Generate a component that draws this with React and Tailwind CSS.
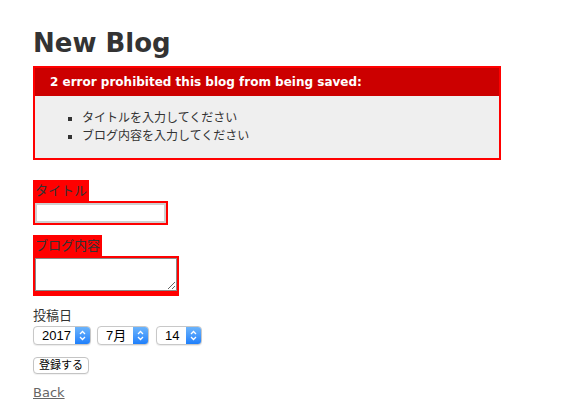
import { useState } from "react";

const FONT = "font-['DejaVu_Sans','Noto_Sans_CJK_JP',sans-serif]";

function Stepper() {
  return (
    <svg width="7" height="11" viewBox="0 0 7 11" fill="none">
      <path d="M1 4 L3.5 1.5 L6 4" stroke="white" strokeWidth="1.3" />
      <path d="M1 7 L3.5 9.5 L6 7" stroke="white" strokeWidth="1.3" />
    </svg>
  );
}

// Mac風のセレクトボックス
function FakeSelect({ value, width, ml }) {
  return (
    <div
      className={`${width} ${ml} h-[19px] flex items-stretch rounded-[4px] border border-[#c8c8c8] bg-white shadow-[0_1px_1px_rgba(0,0,0,0.08)] overflow-hidden`}>
      <span className="flex-1 pl-[8px] font-['Liberation_Sans','Noto_Sans_CJK_JP',sans-serif] text-[13px] leading-[17px] text-black">
        {value}
      </span>
      <span className="w-[15px] flex items-center justify-center bg-gradient-to-b from-[#6cb4fb] to-[#1d7ffb]">
        <Stepper />
      </span>
    </div>
  );
}

export default function App() {
  const [title, setTitle] = useState("");
  const [content, setContent] = useState("");

  return (
    <div className={`${FONT} min-h-[419px] bg-white text-[#333] px-[33px] pt-[30px]`}>
      <h1 className="text-[26px] leading-[26px] font-bold">New Blog</h1>

      {/* エラー表示 */}
      <div className="mt-[10px] w-[468px] h-[94px] border-2 border-[#f00] bg-[#efefef]">
        <h2 className="h-[28px] flex items-center pl-[15px] bg-[#c00] text-white text-[12px] font-bold">
          2 error prohibited this blog from being saved:
        </h2>
        <ul className="mt-[13px] pl-[47px] list-[square] text-[12px] leading-[18px]">
          <li>タイトルを入力してください</li>
          <li>ブログ内容を入力してください</li>
        </ul>
      </div>

      <div className="mt-[20px] text-[13px]">
        <div className="w-fit h-[21px] px-[2px] pt-[2px] bg-[#f00] leading-[18px]">タイトル</div>
        <div className="w-fit p-[2px] bg-[#f00]">
          <input
            type="text"
            value={title}
            onChange={(e) => setTitle(e.target.value)}
            className="block w-[131px] h-[20px] bg-white border-2 border-[#cfcfcf] outline-none text-[13px] px-[2px]"
          />
        </div>
      </div>

      <div className="mt-[10px] text-[13px]">
        <div className="w-fit h-[21px] px-[2px] pt-[2px] bg-[#f00] leading-[18px]">ブログ内容</div>
        <div className="w-fit p-[2px] pb-[5px] bg-[#f00]">
          <textarea
            value={content}
            onChange={(e) => setContent(e.target.value)}
            className="block w-[142px] h-[33px] bg-white border border-[#8a8a8a] outline-none text-[13px]"
          />
        </div>
      </div>

      <div className="mt-[10px] text-[13px]">
        <div className="h-[19px] leading-[19px]">投稿日</div>
        <div className="flex h-[19px] mt-[1px]">
          <FakeSelect value="2017" width="w-[58px]" ml="ml-0" />
          <FakeSelect value="7月" width="w-[52px]" ml="ml-[6px]" />
          <FakeSelect value="14" width="w-[46px]" ml="ml-[7px]" />
        </div>
      </div>

      <button className="block mt-[12px] w-[56px] h-[17px] rounded-[4px] border border-[#c4c4c4] bg-white text-[11px] leading-[15px] text-black shadow-[0_1px_1px_rgba(0,0,0,0.06)]">
        登録する
      </button>

      <div className="mt-[10px] h-[18px] text-[13px] leading-[18px]">
        <a href="#" className="text-[#666] underline">
          Back
        </a>
      </div>
    </div>
  );
}
